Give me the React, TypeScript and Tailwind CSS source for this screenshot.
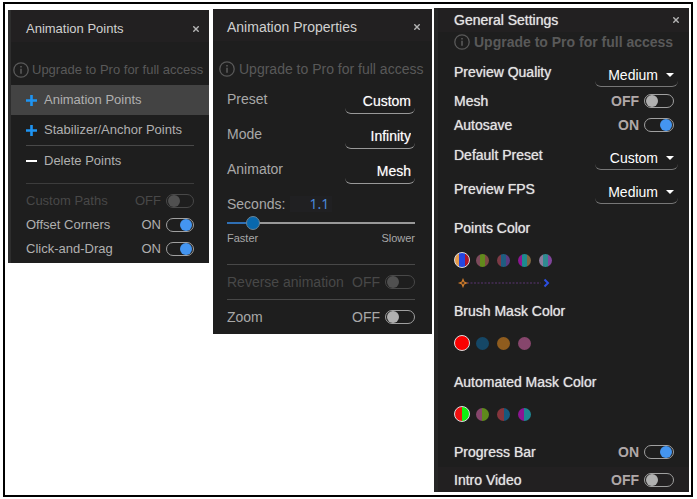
import React, { useState } from "react";
import clsx from "clsx";

interface SwitchRowProps {
  label: string;
  defaultOn?: boolean;
  disabled?: boolean;
  className?: string;
  labelClass?: string;
  stateClass?: string;
  trackClass?: string;
}

const SwitchRow: React.FC<SwitchRowProps> = ({
  label,
  defaultOn = false,
  disabled = false,
  className = "h-6",
  labelClass,
  stateClass,
  trackClass = "w-[30px]",
}) => {
  const [on, setOn] = useState(defaultOn);

  return (
    <label className={clsx("flex items-center", className, disabled && "text-[#484848]")}>
      <span className={clsx("flex-1 whitespace-nowrap", labelClass)}>{label}</span>
      <span className={clsx("mr-[5px]", stateClass)}>{on ? "ON" : "OFF"}</span>
      <input
        type="checkbox"
        checked={on}
        disabled={disabled}
        onChange={(e) => setOn(e.target.checked)}
        className={clsx(
          "h-[14px] shrink-0 appearance-none rounded-full border px-px before:block before:size-3 before:rounded-full checked:before:ml-auto checked:before:bg-[#4495f0]",
          disabled ? "border-[#484848] before:bg-[#505050]" : "border-[#a0a0a0] before:bg-[#b0b0b0]",
          trackClass
        )}
      />
    </label>
  );
};

interface SelectRowProps {
  id: string;
  label: string;
  value: string;
  options: string[];
  caret?: boolean;
}

const SelectRow: React.FC<SelectRowProps> = ({ id, label, value, options, caret }) => {
  const [selected, setSelected] = useState(value);

  return (
    <div className={clsx("flex items-center justify-between", caret ? "h-[34px]" : "h-[35px]")}>
      <label htmlFor={id} className="whitespace-nowrap">{label}</label>
      <div className={clsx("relative pt-[6px]", caret && "-mr-1")}>
        <select
          id={id}
          value={selected}
          onChange={(e) => setSelected(e.target.value)}
          className={clsx(
            "block h-6 appearance-none rounded-b-md border-b bg-transparent text-white [text-align-last:right]",
            caret ? "w-[83px] border-[#777] pr-5" : "w-[70px] border-[#999] pr-1 [text-shadow:0_0_1px_#ffffff80]"
          )}
        >
          {options.map((o) => (
            <option key={o} className="bg-[#1e1e1e]">{o}</option>
          ))}
        </select>
        {caret && (
          <svg viewBox="0 0 8 4" className="pointer-events-none absolute top-4 right-1 h-1 w-2 fill-white">
            <path d="M0 0h8L4 4z" />
          </svg>
        )}
      </div>
    </div>
  );
};

const PanelHeader: React.FC<{ title: string; className: string }> = ({ title, className }) => (
  <div className={clsx("flex items-center justify-between bg-[#222021]", className)}>
    <h2>{title}</h2>
    <button aria-label="Close">
      <svg viewBox="0 0 6 6" className="size-[6px] stroke-[#b5b5b5]" fill="none" strokeWidth="1.4">
        <path d="M.3.3l5.4 5.4M5.7.3L.3 5.7" />
      </svg>
    </button>
  </div>
);

const UpgradeLink: React.FC<{ className: string }> = ({ className }) => (
  <a href="#upgrade" className={clsx("flex items-center whitespace-nowrap text-[#595959]", className)}>
    <svg viewBox="0 0 16 16" className="size-4 shrink-0" fill="none" stroke="currentColor" strokeWidth="1.3">
      <circle cx="8" cy="8" r="7.2" />
      <path d="M8 6.8v5M8 4v1.5" strokeWidth="1.6" />
    </svg>
    Upgrade to Pro for full access
  </a>
);

const Swatches: React.FC<{ name: string; colors: string[] }> = ({ name, colors }) => {
  const [active, setActive] = useState(0);

  return (
    <div role="radiogroup" aria-label={name} className="mt-[14px] flex h-4 items-center">
      {colors.map((color, i) => (
        <span key={color} className={clsx("flex justify-center", i === 0 ? "w-4 mr-[2px]" : "w-[21px]")}>
          <input
            type="radio"
            name={name}
            aria-label={`${name} ${i + 1}`}
            checked={active === i}
            onChange={() => setActive(i)}
            className={clsx(
              "size-[13px] shrink-0 appearance-none rounded-full bg-origin-border checked:size-4 checked:border checked:border-[#ddd]",
              color
            )}
          />
        </span>
      ))}
    </div>
  );
};

const pointColors = [
  "bg-[linear-gradient(90deg,#e39a4b_33%,#2446e0_33%_67%,#b01428_67%)]",
  "bg-[linear-gradient(90deg,#7d4a5c_30%,#628a1c_30%_70%,#7d4a45_70%)]",
  "bg-[linear-gradient(90deg,#7c3a45_30%,#1f5d80_30%_70%,#5b3a80_70%)]",
  "bg-[linear-gradient(90deg,#8c1592_32%,#1d8a8f_32%_70%,#7d6840_70%)]",
  "bg-[linear-gradient(90deg,#8c7c9c_32%,#2f8a90_32%_70%,#80459c_70%)]",
];

const brushColors = ["bg-[#fa0000]", "bg-[#154766]", "bg-[#8f5c1e]", "bg-[#86466c]"];

const autoColors = [
  "bg-[linear-gradient(90deg,#f01010_50%,#10f010_50%)]",
  "bg-[linear-gradient(90deg,#86466c_50%,#5f8a1c_50%)]",
  "bg-[linear-gradient(90deg,#86353c_50%,#17587c_50%)]",
  "bg-[linear-gradient(90deg,#8c1592_50%,#1d8592_50%)]",
];

const AnimationPoints = () => (
  <section className="mt-[2px] mr-1 min-w-0 flex-[198] border-l-3 border-[#2d2d2d] bg-[#1e1e1e] pb-[2px] text-[13px] text-[#b0b0b0]">
    <PanelHeader title="Animation Points" className="h-8 pt-[6px] pr-[10px] pl-[15px] text-[#d0d0d0]" />
    <UpgradeLink className="mt-[18px] h-5 gap-[3px] pl-[2px]" />
    <button className="mt-[5px] flex h-[30px] w-full items-center gap-[7px] bg-[#434343] pl-[15px]">
      <svg viewBox="0 0 11 11" className="size-[11px] stroke-[#1e94f2]" strokeWidth="2.6">
        <path d="M5.5 0v11M0 5.5h11" />
      </svg>
      Animation Points
    </button>
    <div className="pr-[15px] pl-[15px]">
      <button className="flex h-[31px] w-full items-center gap-[7px] border-b border-[#494949] whitespace-nowrap">
        <svg viewBox="0 0 11 11" className="size-[11px] stroke-[#1e94f2]" strokeWidth="2.6">
          <path d="M5.5 0v11M0 5.5h11" />
        </svg>
        Stabilizer/Anchor Points
      </button>
      <button className="mb-[5px] flex h-[38px] w-full items-center gap-[7px] border-b border-[#3c3c3c] pb-2">
        <svg viewBox="0 0 11 11" className="size-[11px] stroke-white" strokeWidth="2">
          <path d="M0 6h11" />
        </svg>
        Delete Points
      </button>
      <SwitchRow label="Custom Paths" disabled trackClass="w-7" />
      <SwitchRow label="Offset Corners" defaultOn trackClass="w-7" />
      <SwitchRow label="Click-and-Drag" defaultOn trackClass="w-7" />
    </div>
  </section>
);

const AnimationProperties = () => {
  const [seconds, setSeconds] = useState(1.1);

  return (
    <section className="mt-px mr-[2px] min-w-0 flex-[219] bg-[#1e1e1e] text-sm text-[#a8a8a8]">
      <PanelHeader title="Animation Properties" className="h-8 pt-[3px] pr-3 pl-[14px] text-[#d0d0d0]" />
      <UpgradeLink className="mt-[18px] h-5 gap-1 pl-[6px]" />
      <div className="pt-[2px] pr-[17px] pl-[14px]">
        <SelectRow id="preset" label="Preset" value="Custom" options={["Custom", "Basic"]} />
        <SelectRow id="mode" label="Mode" value="Infinity" options={["Infinity", "Once"]} />
        <SelectRow id="animator" label="Animator" value="Mesh" options={["Mesh", "Plane"]} />
        <div className="mt-2 flex h-5 items-center">
          <label htmlFor="seconds">Seconds:</label>
          <input
            id="seconds"
            type="text"
            inputMode="decimal"
            value={seconds}
            onChange={(e) => setSeconds(Number(e.target.value) || 0)}
            className="ml-[5px] h-4 w-[42px] bg-[#202022] pr-[3px] text-right font-['Noto_Sans',sans-serif] text-sm text-[#4a86d8]"
          />
        </div>
        <input
          type="range"
          aria-label="Seconds"
          min={0}
          max={10}
          step={0.1}
          value={seconds}
          onChange={(e) => setSeconds(Number(e.target.value))}
          style={{ backgroundImage: `linear-gradient(90deg, #2f6fb4 ${seconds * 10}%, #999 ${seconds * 10}%)` }}
          className="mt-[2px] block h-[14px] w-full appearance-none bg-[length:100%_2px] bg-center bg-no-repeat [&::-webkit-slider-thumb]:size-[14px] [&::-webkit-slider-thumb]:appearance-none [&::-webkit-slider-thumb]:rounded-full [&::-webkit-slider-thumb]:border [&::-webkit-slider-thumb]:border-[#6b8496] [&::-webkit-slider-thumb]:bg-[#0868ae]"
        />
        <div className="flex h-[18px] items-center justify-between text-[11px]">
          <span>Faster</span>
          <span>Slower</span>
        </div>
        <SwitchRow label="Reverse animation" disabled className="mt-4 h-9 border-y border-[#484848]" />
        <SwitchRow label="Zoom" className="h-[34px]" />
      </div>
    </section>
  );
};

const GeneralSettings = () => {
  const levels = ["Low", "Medium", "High"];
  const stateClass = "font-bold text-[#b0a8a8] [text-shadow:none]";

  return (
    <section className="min-w-0 flex-[251] border-l-4 border-[#262626] bg-[#1e1e1e] text-sm text-[#e4e4e4] [text-shadow:0_0_1px_#ffffffb0]">
      <PanelHeader title="General Settings" className="h-6 pr-[10px] pl-4" />
      <UpgradeLink className="h-5 gap-1 pl-4 font-bold [text-shadow:none]" />
      <div className="pt-[3px] pr-[15px] pl-4">
        <SelectRow id="quality" label="Preview Quality" value="Medium" options={levels} caret />
        <SwitchRow label="Mesh" stateClass={stateClass} />
        <SwitchRow label="Autosave" defaultOn stateClass={stateClass} />
        <div className="pt-px">
          <SelectRow id="default-preset" label="Default Preset" value="Custom" options={["Custom", "Basic"]} caret />
          <SelectRow id="fps" label="Preview FPS" value="Medium" options={levels} caret />
        </div>

        <h3 className="mt-3 leading-5">Points Color</h3>
        <Swatches name="Points Color" colors={pointColors} />
        <svg viewBox="0 0 96 10" className="mt-[10px] block h-[10px] w-24" fill="none">
          <path d="M13 5h74" stroke="#5a3472" strokeDasharray="2 1.5" />
          <path d="M9 1.500L10 4l2.500 1L10 6 9 8.500 8 6 5.500 5 8 4z" stroke="#d07c2c" strokeWidth="1.2" />
          <path d="M90.500 1.500L94 5l-3.500 3.500" stroke="#2c4ee0" strokeWidth="2" />
        </svg>

        <h3 className="mt-[13px] leading-5">Brush Mask Color</h3>
        <Swatches name="Brush Mask Color" colors={brushColors} />

        <h3 className="mt-[21px] leading-5">Automated Mask Color</h3>
        <Swatches name="Automated Mask Color" colors={autoColors} />

        <SwitchRow label="Progress Bar" defaultOn className="mt-[18px] h-6" stateClass={stateClass} />
      </div>
      <SwitchRow
        label="Intro Video"
        className="mt-[3px] h-[25px] bg-[#222021] pr-[15px] pl-4"
        stateClass={stateClass}
      />
    </section>
  );
};

export default function App() {
  return (
    <div className="bg-white pt-[2px] pr-1 pb-[2px] pl-[3px] font-['Liberation_Sans',Arial,sans-serif]">
      <main className="flex items-start border-2 border-black pt-1 pr-[2px] pb-[3px] pl-[3px]">
        <AnimationPoints />
        <AnimationProperties />
        <GeneralSettings />
      </main>
    </div>
  );
}
